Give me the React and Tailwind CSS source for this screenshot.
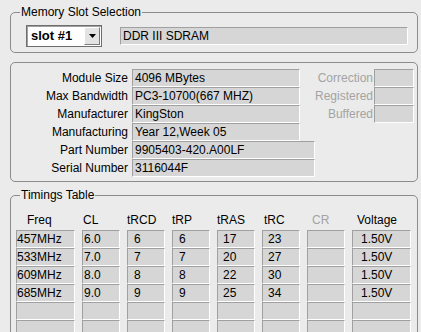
import React from 'react';

const sunken = 'border border-t-[#a0a0a0] border-l-[#a0a0a0] border-b-white border-r-white bg-[#d6d6d6]';

const infoRows = [
  { label: 'Module Size', value: '4096 MBytes', w: 'w-[168px]' },
  { label: 'Max Bandwidth', value: 'PC3-10700(667 MHZ)', w: 'w-[168px]' },
  { label: 'Manufacturer', value: 'KingSton', w: 'w-[168px]' },
  { label: 'Manufacturing', value: 'Year 12,Week 05', w: 'w-[168px]' },
  { label: 'Part Number', value: '9905403-420.A00LF', w: 'w-[183px]' },
  { label: 'Serial Number', value: '3116044F', w: 'w-[183px]' },
];

const flags = ['Correction', 'Registered', 'Buffered'];

const columns = [
  { head: 'Freq', w: 'w-[59px]', hp: 'pl-[11px]', vp: 'pl-0', values: ['457MHz', '533MHz', '609MHz', '685MHz'] },
  { head: 'CL', w: 'w-[38px]', hp: 'pl-px', vp: 'pl-px', values: ['6.0', '7.0', '8.0', '9.0'] },
  { head: 'tRCD', w: 'w-[38px]', hp: 'pl-0', vp: 'pl-[6px]', values: ['6', '7', '8', '9'] },
  { head: 'tRP', w: 'w-[38px]', hp: 'pl-0', vp: 'pl-[6px]', values: ['6', '7', '8', '9'] },
  { head: 'tRAS', w: 'w-[38px]', hp: 'pl-0', vp: 'pl-[5px]', values: ['17', '20', '22', '25'] },
  { head: 'tRC', w: 'w-[38px]', hp: 'pl-[2px]', vp: 'pl-[5px]', values: ['23', '27', '30', '34'] },
  { head: 'CR', w: 'w-[38px]', hp: 'pl-[5px]', vp: 'pl-0', values: [], disabled: true },
  { head: 'Voltage', w: 'w-[59px]', hp: 'pl-[5px]', vp: 'pl-[8px]', values: ['1.50V', '1.50V', '1.50V', '1.50V'] },
];

export default function App() {
  return (
    <div className="w-[421px] h-[332px] overflow-hidden bg-[#ebebeb] pl-[10px] pt-[4px] font-['Liberation_Sans',Arial,sans-serif] text-[12px] text-black">
      {/* Memory Slot Selection */}
      <fieldset className="w-[408px] border border-[#8c8c8c] rounded-[5px]">
        <legend className="ml-[9px] px-px leading-4">Memory Slot Selection</legend>
        <div className="flex items-center pl-[15px] pt-[5px] pb-[5px]">
          <div className="w-[76px] h-[22px] flex items-center justify-between bg-white border border-[#6e6e6e] shadow-[inset_1px_1px_0_#a0a0a0]">
            <span className="pl-[4px] text-[13px] font-bold leading-4">slot #1</span>
            <div className="w-[16px] h-[18px] mr-px flex items-center justify-center bg-[#e3e3e3] border border-t-white border-l-white border-b-[#7a7a7a] border-r-[#7a7a7a]">
              <svg width="7" height="4" viewBox="0 0 7 4">
                <path d="M0 0h7L3.5 4z" fill="#000" />
              </svg>
            </div>
          </div>
          <div className={`ml-[18px] w-[288px] h-[18px] leading-4 pl-[2px] ${sunken}`}>DDR III SDRAM</div>
        </div>
      </fieldset>

      {/* Module info */}
      <div className="mt-[9px] w-[408px] flex border border-[#8c8c8c] rounded-[5px] pt-[6px] pb-[4px] pr-[5px]">
        <div className="w-[304px] flex flex-col">
          {infoRows.map((r) => (
            <div key={r.label} className="flex items-center gap-[4px] h-[18px]">
              <div className="w-[117px] text-right leading-[18px]">{r.label}</div>
              <div className={`h-[18px] leading-4 pl-[2px] ${r.w} ${sunken}`}>{r.value}</div>
            </div>
          ))}
        </div>
        <div className="flex-1 flex flex-col">
          {flags.map((f) => (
            <div key={f} className="flex items-center gap-px h-[18px]">
              <div className="flex-1 text-right leading-[18px] text-[#a3a3a3]">{f}</div>
              <div className={`w-[40px] h-[18px] ${sunken}`} />
            </div>
          ))}
        </div>
      </div>

      {/* Timings Table */}
      <fieldset className="mt-[5px] w-[408px] h-[200px] border border-[#8c8c8c] rounded-[5px]">
        <legend className="ml-[9px] px-px leading-4">Timings Table</legend>
        <div className="flex gap-[7px] pl-[5px] pt-[8px]">
          {columns.map((c) => (
            <div key={c.head} className={`flex flex-col ${c.w}`}>
              <div className={`h-[19px] leading-[18px] ${c.hp} ${c.disabled ? 'text-[#a3a3a3]' : ''}`}>{c.head}</div>
              {[0, 1, 2, 3, 4, 5].map((i) => (
                <div key={i} className={`h-[18px] leading-4 ${c.vp} ${sunken}`}>{c.values[i] || ''}</div>
              ))}
            </div>
          ))}
        </div>
      </fieldset>
    </div>
  );
}
